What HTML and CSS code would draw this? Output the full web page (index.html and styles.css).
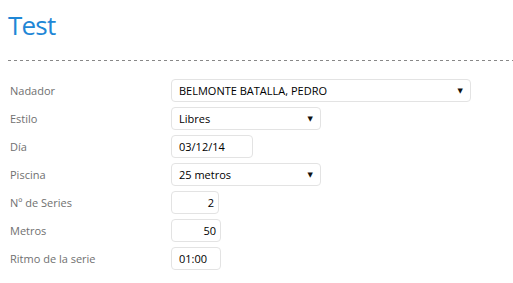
FILE: index.html
```html
<!DOCTYPE html>
<html lang="es">
<head>
<meta charset="utf-8">
<title>Test</title>
<link rel="stylesheet" href="styles.css">
</head>
<body>
<h1 class="title">Test</h1>
<div class="divider"></div>
<form class="form">
  <div class="row">
    <label class="label">Nadador</label>
    <div class="control select w-300"><span>BELMONTE BATALLA, PEDRO</span><span class="arrow">▼</span></div>
  </div>
  <div class="row">
    <label class="label">Estilo</label>
    <div class="control select w-150"><span>Libres</span><span class="arrow">▼</span></div>
  </div>
  <div class="row">
    <label class="label">Día</label>
    <div class="control w-82"><span>03/12/14</span></div>
  </div>
  <div class="row">
    <label class="label">Piscina</label>
    <div class="control select w-150"><span>25 metros</span><span class="arrow">▼</span></div>
  </div>
  <div class="row">
    <label class="label">Nº de Series</label>
    <div class="control num w-48"><span>2</span></div>
  </div>
  <div class="row">
    <label class="label">Metros</label>
    <div class="control num w-50"><span>50</span></div>
  </div>
  <div class="row">
    <label class="label">Ritmo de la serie</label>
    <div class="control w-50"><span>01:00</span></div>
  </div>
</form>
</body>
</html>
```
FILE: styles.css
```css
html, body {
  margin: 0;
  padding: 0;
  background: #fff;
}
body {
  padding: 0 0 0 8px;
  font-family: "Open Sans", "Noto Sans", "DejaVu Sans", sans-serif;
  font-size: 11px;
  color: #000;
}
.title {
  margin: 0;
  padding-top: 6px;
  height: 38px;
  font-size: 26px;
  font-weight: 400;
  line-height: 38px;
  letter-spacing: -0.8px;
  color: #1f87d6;
}
.divider {
  margin-top: 16px;
  height: 1px;
  background: repeating-linear-gradient(to right, #888 0 3px, transparent 3px 6px);
}
.form {
  display: flex;
  flex-direction: column;
  gap: 5px;
  padding-top: 18px;
}
.row {
  display: flex;
  align-items: center;
  height: 23px;
}
.label {
  width: 161px;
  padding-left: 2px;
  color: #707070;
  font-size: 11px;
}
.control {
  box-sizing: border-box;
  height: 23px;
  border: 1px solid #e3e3e3;
  border-radius: 4px;
  display: flex;
  align-items: center;
  padding: 0 6px 0 7px;
  color: #000;
  font-size: 11px;
  background: #fff;
}
.select {
  justify-content: space-between;
}
.arrow {
  font-size: 7px;
  color: #111;
  padding-right: 1px;
}
.num {
  justify-content: flex-end;
  padding-right: 4px;
}
.w-300 { width: 300px; }
.w-150 { width: 150px; }
.w-82 { width: 82px; }
.w-48 { width: 48px; }
.w-50 { width: 50px; }
```
